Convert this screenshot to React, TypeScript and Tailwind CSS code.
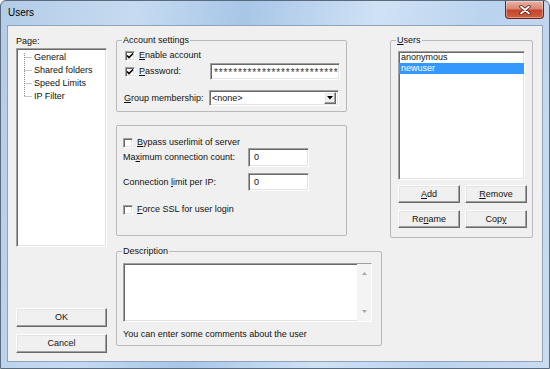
import React from "react";

const sunken =
  "bg-white border border-t-[#a0a0a0] border-l-[#a0a0a0] border-r-white border-b-white shadow-[inset_1px_1px_0_#696969,inset_-1px_-1px_0_#e3e3e3]";
const raised =
  "bg-[#f0f0f0] border border-t-white border-l-white border-r-[#696969] border-b-[#696969] shadow-[inset_-1px_-1px_0_#a0a0a0,inset_1px_1px_0_#e3e3e3]";

function Check({ checked }: { checked?: boolean }) {
  return (
    <span className={`w-[10px] h-[10px] shrink-0 flex items-center justify-center ${sunken}`}>
      {checked && (
        <svg width="8" height="8" viewBox="0 0 8 8">
          <path d="M1 3.5 L3 5.6 L7 1.5" stroke="#000" strokeWidth="1.6" fill="none" />
        </svg>
      )}
    </span>
  );
}

function Btn({ children, w }: { children: React.ReactNode; w: string }) {
  return (
    <div className={`${w} h-full flex items-center justify-center ${raised}`}>{children}</div>
  );
}

export default function App() {
  return (
    <div className="w-[550px] h-[369px] overflow-hidden flex flex-col font-['Liberation_Sans',Arial,sans-serif] text-[9px] leading-[11px] text-[#111] border border-[#5b6b7e] rounded-t-[6px] bg-[linear-gradient(100deg,#b3cce7_0%,#c6dbf1_22%,#a8c6e8_40%,#cfe2f5_62%,#bad3ee_80%,#c9dcf1_100%)]">
      {/* Title bar */}
      <div className="h-[24px] flex items-start justify-between pl-[7px] pr-[5px]">
        <div className="pt-[6px] text-[10px] leading-[12px] text-black">Users</div>
        <div className="w-[39px] h-[18px] flex items-center justify-center border border-t-0 border-[#6e2418] rounded-b-[4px] bg-[linear-gradient(#e9b3a6,#d98773_45%,#c4452c_55%,#d0603f)] shadow-[inset_0_0_0_1px_rgba(255,255,255,0.35)]">
          <svg width="12" height="10" viewBox="0 0 12 10">
            <path d="M2 1.5 L10 8.5 M10 1.5 L2 8.5" stroke="#5a1a10" strokeWidth="3.4" strokeLinecap="round" />
            <path d="M2 1.5 L10 8.5 M10 1.5 L2 8.5" stroke="#ffffff" strokeWidth="1.8" strokeLinecap="round" />
          </svg>
        </div>
      </div>

      {/* Client area */}
      <div className="mx-[6px] h-[337px] bg-[#f0f0f0] border border-[#8fa4bb] flex pl-[8px] pr-[9px]">
        {/* Left column */}
        <div className="w-[91px] flex flex-col pt-[9px] pb-[8px]">
          <div className="h-[13px] leading-[13px]">Page:</div>
          <div className={`h-[199px] ${sunken} pl-[6px] pt-[2px] flex`}>
            <svg width="10" height="52" className="shrink-0">
              <line x1="1.5" y1="2" x2="1.5" y2="45.5" stroke="#8a8a8a" strokeDasharray="1 1" />
              {[6.5, 19.5, 32.5, 45.5].map((y) => (
                <line key={y} x1="1.5" y1={y} x2="9" y2={y} stroke="#8a8a8a" strokeDasharray="1 1" />
              ))}
            </svg>
            <div className="flex flex-col pl-[1px]">
              <div className="h-[13px] leading-[13px]">General</div>
              <div className="h-[13px] leading-[13px]">Shared folders</div>
              <div className="h-[13px] leading-[13px]">Speed Limits</div>
              <div className="h-[13px] leading-[13px]">IP Filter</div>
            </div>
          </div>
          <div className="mt-auto h-[19px]">
            <Btn w="w-[91px]">OK</Btn>
          </div>
          <div className="mt-[7px] h-[19px]">
            <Btn w="w-[91px]">Cancel</Btn>
          </div>
        </div>

        {/* Middle column */}
        <div className="ml-[9px] w-[266px] flex flex-col pt-[8px]">
          <fieldset className="w-[231px] h-[78px] border border-[#b9b9b9] rounded-[2px] m-0 p-0 min-w-0">
            <legend className="ml-[5px] px-[1px] leading-[12px]">Account settings</legend>
            <div className="pl-[8px] pt-[4px] flex flex-col">
              <div className="h-[11px] flex items-center gap-[4px]">
                <Check checked />
                <span>
                  <span className="underline">E</span>nable account
                </span>
              </div>
              <div className="mt-[2px] h-[17px] flex items-center">
                <div className="w-[85px] flex items-center gap-[4px]">
                  <Check checked />
                  <span>
                    <span className="underline">P</span>assword:
                  </span>
                </div>
                <div className={`w-[130px] h-[17px] ${sunken} pl-[3px] pt-[3px] overflow-hidden text-[10px] leading-[12px] tracking-[0.9px] whitespace-nowrap text-[#333]`}>
                  **************************
                </div>
              </div>
              <div className="mt-[10px] h-[16px] flex items-center">
                <div className="w-[85px] -ml-[1px] pr-[1px]">
                  <span className="underline">G</span>roup membership:
                </div>
                <div className={`w-[130px] h-[16px] ${sunken} flex items-center justify-between pl-[2px] pr-[2px]`}>
                  <span>&lt;none&gt;</span>
                  <div className={`w-[12px] h-[12px] flex items-center justify-center ${raised}`}>
                    <svg width="6" height="4" viewBox="0 0 6 4">
                      <path d="M0 0 H6 L3 3.5 Z" fill="#000" />
                    </svg>
                  </div>
                </div>
              </div>
            </div>
          </fieldset>

          <div className="mt-[13px] w-[231px] h-[111px] border border-[#b9b9b9] rounded-[2px] pl-[6px] pt-[11px] flex flex-col">
            <div className="h-[11px] flex items-center gap-[4px]">
              <Check />
              <span>
                <span className="underline">B</span>ypass userlimit of server
              </span>
            </div>
            <div className="h-[19px] flex items-center">
              <div className="w-[125px]">
                Ma<span className="underline">x</span>imum connection count:
              </div>
              <div className={`w-[61px] h-[19px] ${sunken} pl-[5px] flex items-center`}>0</div>
            </div>
            <div className="mt-[6px] h-[18px] flex items-center">
              <div className="w-[125px]">
                Connection <span className="underline">l</span>imit per IP:
              </div>
              <div className={`w-[61px] h-[18px] ${sunken} pl-[5px] flex items-center`}>0</div>
            </div>
            <div className="mt-[13px] h-[11px] flex items-center gap-[4px]">
              <Check />
              <span>
                <span className="underline">F</span>orce SSL for user login
              </span>
            </div>
          </div>

          <fieldset className="mt-[9px] w-[266px] h-[101px] border border-[#b9b9b9] rounded-[2px] m-0 p-0 min-w-0">
            <legend className="ml-[5px] px-[1px] leading-[12px]">Description</legend>
            <div className="pl-[6px] pt-[6px] flex flex-col">
              <div className={`w-[249px] h-[59px] ${sunken} flex justify-end`}>
                <div className="w-[14px] h-full bg-[#f4f4f4] flex flex-col items-center justify-between py-[8px]">
                  <svg width="5" height="3" viewBox="0 0 5 3">
                    <path d="M0 3 L2.5 0 L5 3 Z" fill="#a6a6a6" />
                  </svg>
                  <svg width="5" height="3" viewBox="0 0 5 3">
                    <path d="M0 0 L2.5 3 L5 0 Z" fill="#a6a6a6" />
                  </svg>
                </div>
              </div>
              <div className="mt-[6px] leading-[12px]">You can enter some comments about the user</div>
            </div>
          </fieldset>
        </div>

        {/* Right column */}
        <div className="ml-[8px] w-[143px] pt-[8px]">
          <fieldset className="w-[143px] h-[204px] border border-[#b9b9b9] rounded-[2px] m-0 p-0 min-w-0">
            <legend className="ml-[5px] px-[1px] leading-[12px]">
              <span className="underline">U</span>sers
            </legend>
            <div className="pl-[7px] pt-[5px] flex flex-col">
              <div className={`w-[127px] h-[129px] ${sunken} flex flex-col`}>
                <div className="h-[11px] leading-[11px] px-[2px]">anonymous</div>
                <div className="h-[11px] leading-[11px] px-[2px] bg-[#3399ff] text-white">newuser</div>
              </div>
              <div className="mt-[5px] h-[18px] flex gap-[5px]">
                <Btn w="w-[62px]">
                  <span>
                    <span className="underline">A</span>dd
                  </span>
                </Btn>
                <Btn w="w-[62px]">
                  <span>
                    <span className="underline">R</span>emove
                  </span>
                </Btn>
              </div>
              <div className="mt-[7px] h-[18px] flex gap-[5px]">
                <Btn w="w-[62px]">
                  <span>
                    Re<span className="underline">n</span>ame
                  </span>
                </Btn>
                <Btn w="w-[62px]">
                  <span>
                    Cop<span className="underline">y</span>
                  </span>
                </Btn>
              </div>
            </div>
          </fieldset>
        </div>
      </div>
    </div>
  );
}
